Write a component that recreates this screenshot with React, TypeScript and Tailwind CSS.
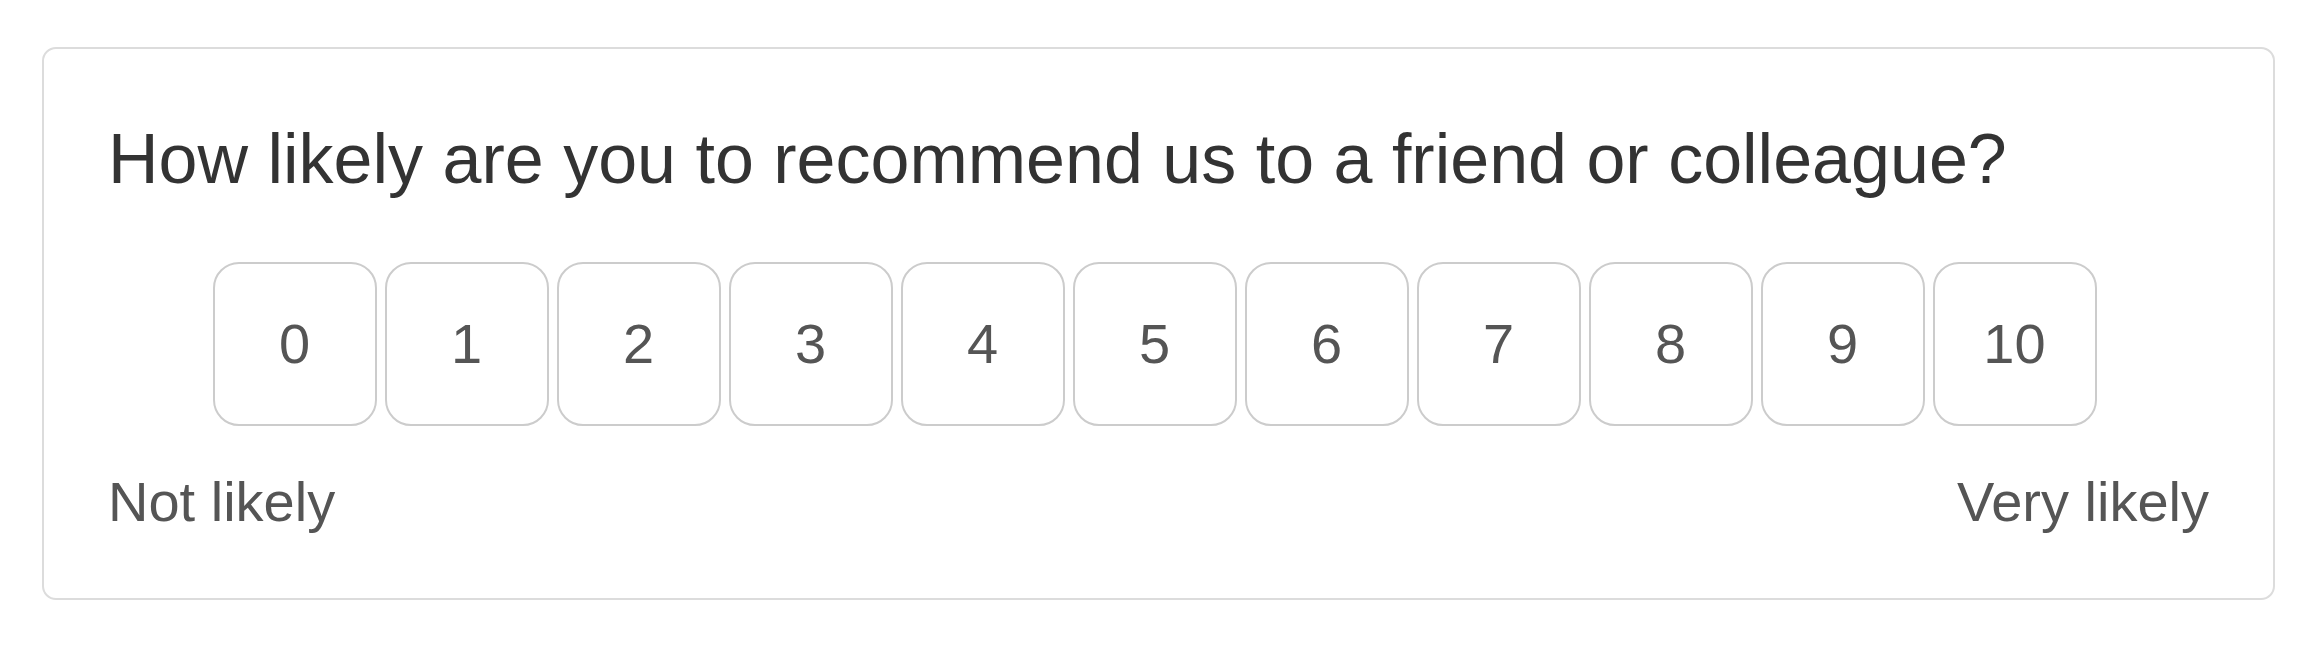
export default function App() {
  const scores = [0, 1, 2, 3, 4, 5, 6, 7, 8, 9, 10];

  return (
    <div className="w-full min-h-screen bg-white pt-[47px] pl-[42px] pr-[37px] font-['Liberation_Sans',Arial,sans-serif]">
      <div className="flex flex-col rounded-[14px] border-2 border-[#dcdcdc] bg-white px-16 pt-[68px] pb-[63px]">
        <h1 className="text-[70px] leading-[1.2] font-normal text-[#333333]">
          How likely are you to recommend us to a friend or colleague?
        </h1>

        <div className="mt-[61px] flex justify-center gap-2 pr-[8px]">
          {scores.map((n) => (
            <button
              key={n}
              className="flex h-[164px] w-[164px] items-center justify-center rounded-[26px] border-2 border-[#cccccc] bg-white text-[56px] text-[#555555]"
            >
              {n}
            </button>
          ))}
        </div>

        <div className="mt-[42px] flex justify-between text-[56px] leading-[1.2] text-[#555555]">
          <span>Not likely</span>
          <span>Very likely</span>
        </div>
      </div>
    </div>
  );
}
